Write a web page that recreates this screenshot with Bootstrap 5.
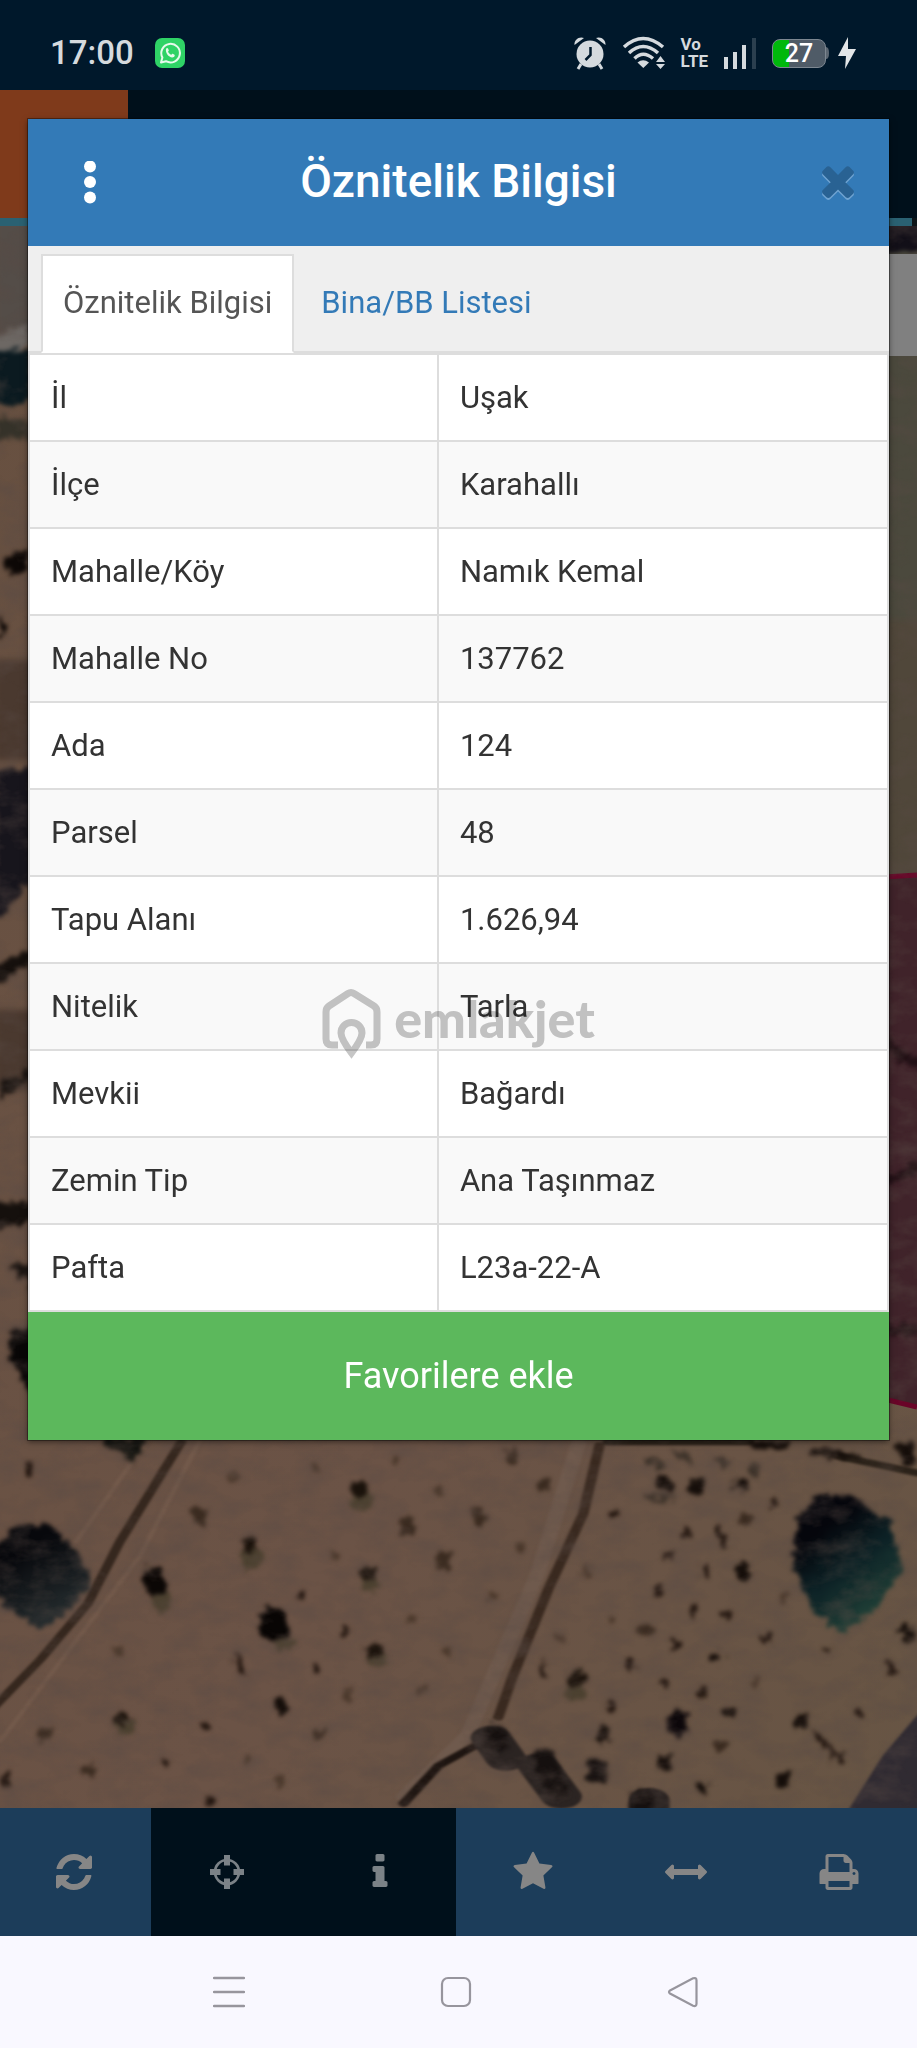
<!DOCTYPE html>
<html lang="tr">
<head>
<meta charset="utf-8">
<meta name="viewport" content="width=device-width, initial-scale=1">
<title>Öznitelik Bilgisi</title>
<link href="https://cdn.jsdelivr.net/npm/bootstrap@5.3.0/dist/css/bootstrap.min.css" rel="stylesheet">
<style>
  body { font-family: Roboto, "Liberation Sans", sans-serif; font-size: 31px; line-height: 44px; color: #333; background: #f9f8ff; }
  .screen, .stage { display: grid; grid-template-columns: minmax(0, 1fr); }
  .screen { min-height: 100vh; }
  .screen > *, .stage > * { grid-area: 1 / 1; min-width: 0; }

  .status-bar { height: 90px; background: #00182b; color: #d5dade; padding: 16px 60px 0 50px; }
  .clock { font-size: 33px; font-weight: 500; }
  .volte { font-size: 17px; line-height: 17px; font-weight: 700; }
  .status-icons { gap: 15px; }
  .battery { width: 54px; height: 29px; border-radius: 8px; color: #fff; font-size: 25px; line-height: 31px; font-weight: 500;
    background: linear-gradient(90deg, #00b80c 16px, #4f5b67 16px); border: 1px solid #7d8791; }

  .app-head { height: 128px; background: #00101b; }
  .app-logo { width: 128px; background: #7f3a1b; }
  .load-line { height: 8px; background: #0d1518; }
  .load-line span { display: block; height: 8px; margin-right: 5px; background: #2a6172; }
  .map { background: #68513f; }
  .map svg { flex: 1 1 0; min-height: 0; width: 100%; }
  .map-tool { top: 28px; right: 0; width: 64px; height: 102px; background: #808080; }
  .tools { background: #1c3d5a; }
  .tools-row { height: 128px; margin-left: -2px; margin-right: 2px; }
  .tool { color: #868686; background: #1c3d5a; }
  .tool.on { color: #7b8287; background: #00101b; }

  .sheet { margin: 29px 28px; background: #efefef; box-shadow: 0 0 0 1px rgba(0,0,0,.35), 0 2px 6px rgba(0,0,0,.5); }
  .sheet-head { display: grid; grid-template-columns: 1fr auto 1fr; height: 127px; background: #337ab7; color: #fff; padding: 0 21px; }
  .sheet-title { font-size: 46px; line-height: 52px; font-weight: 500; }
  .head-btn { width: 60px; height: 60px; }
  .head-menu { width: 82px; }
  .tabs { --bs-nav-tabs-border-width: 2px; --bs-nav-tabs-border-color: #ddd; --bs-nav-tabs-border-radius: 0;
    --bs-nav-tabs-link-active-border-color: #ddd #ddd #fff; --bs-nav-tabs-link-active-color: #555;
    --bs-nav-link-color: #337ab7; --bs-nav-link-padding-x: 20px; --bs-nav-link-padding-y: 25px; padding: 8px 0 0 13px; gap: 5px; }
  .tabs .nav-link { padding-bottom: 26px; }
  .attrs { --bs-table-striped-bg: #fff; --bs-table-bg: #f9f9f9; --bs-table-color: #333; --bs-table-striped-color: #333;
    border-color: #ddd; table-layout: fixed; border-left: 2px solid #ddd; }
  .attrs > tbody > tr > * { border-width: 2px; padding: 21px; line-height: 43px; font-weight: 400; }
  .attrs th { width: 47.6%; }
  .fav { height: 128px; background: #5cb85c; color: #fff; font-size: 36px; }

  .sys-nav { height: 112px; gap: 167px; padding-right: 5px; background: #f9f8ff; }
  .sys-btn { width: 60px; height: 60px; }
  .brand-mark { place-self: center; color: #c6c6c6; mix-blend-mode: multiply; pointer-events: none; gap: 12px; }
  .brand-mark span { font-family: Lato, sans-serif; font-weight: 900; font-size: 52px; line-height: 50px; padding-bottom: 12px; }
  button svg, .status-bar svg, .brand-mark svg { display: block; }
</style>
</head>
<body>
<div class="screen">
  <div class="d-flex flex-column">
    <header class="status-bar d-flex align-items-center justify-content-between">
      <div class="d-flex align-items-center gap-3">
        <span class="clock">17:00</span>
        <svg class="ms-1" width="32" height="32" viewBox="0 0 32 32" fill="none"><rect x="1" y="1" width="30" height="30" rx="7" fill="#2fd366"/><path d="M7 25.500l1.400-5A9.300 9.300 0 1 1 12 24.200z" stroke="#e6faec" stroke-width="2" stroke-linejoin="round"/><path d="M12.200 11.500c.6-.8 1.500-.7 1.800 0l.8 1.800c.1.600-.6 1-.8 1.500.8 1.500 1.700 2.300 3.200 3 .6-.3 1-1.200 1.500-1l1.800 1c.5.300.2 1.600-.6 2.200-3.500 2.300-9.500-4-7.700-8.500z" fill="#e6faec"/></svg>
      </div>
      <div class="status-icons d-flex align-items-center">
        <svg width="34" height="34" viewBox="0 0 34 34" fill="none"><g fill="#d5dade"><circle cx="17" cy="18" r="13.500"/><path d="M1.500 9C1 4 6 0 11 2zM32.500 9C33 4 28 0 23 2z"/></g><path d="M8 28l-3 5M26 28l3 5" stroke="#d5dade" stroke-width="3"/><path d="M17.500 11v8l-5 5" stroke="#00182b" stroke-width="2.500"/></svg>
        <svg width="44" height="34" viewBox="0 0 44 34" fill="none" stroke="#d5dade" stroke-width="3.500"><path d="M2 11Q21-6 41 11M7 17Q21 4 36 17M12.500 22.500Q21 14 31 22.500"/><path d="M15.500 26.500Q21 22 27 26.500L21.300 32z" fill="#d5dade" stroke="none"/><path d="M34 26l4.500-6 4.500 6zM34 28l4.500 5 4.500-5z" fill="#d5dade" stroke="none"/></svg>
        <span class="volte">Vo<br>LTE</span>
        <svg width="34" height="34" viewBox="0 0 34 34"><path d="M1 21h4v12H1zM10 16h4v17h-4zM19 9h4v24h-4z" fill="#d5dade"/><path d="M29 2h4v31h-4z" fill="#2b3f4f"/></svg>
        <div class="d-flex align-items-center">
          <span class="battery d-flex align-items-center justify-content-center">27</span>
          <svg width="31" height="34" viewBox="0 0 31 34"><path d="M0 11q3 0 3 6t-3 6z" fill="#5c6772"/><path d="M22 1L12 20h8l-1 13 11-20h-8z" fill="#e3e6e8"/></svg>
        </div>
      </div>
    </header>

    <div class="stage flex-grow-1">
      <div class="d-flex flex-column">
        <div class="app-head d-flex"><div class="app-logo"></div></div>
        <div class="load-line"><span></span></div>
        <div class="map flex-grow-1 d-flex flex-column position-relative">
          <svg viewBox="0 226 917 1582" preserveAspectRatio="xMidYMax slice" aria-hidden="true">
            <defs>
              <filter id="rough" x="-5%" y="-5%" width="110%" height="110%" color-interpolation-filters="sRGB"><feTurbulence type="fractalNoise" baseFrequency=".12" numOctaves="2" seed="4"/><feDisplacementMap in="SourceGraphic" scale="15" xChannelSelector="R" yChannelSelector="G"/><feGaussianBlur stdDeviation="2"/></filter>
              <filter id="soft" x="-5%" y="-5%" width="110%" height="110%" color-interpolation-filters="sRGB"><feGaussianBlur stdDeviation="3"/></filter>
              <filter id="grain" x="0" y="0" width="100%" height="100%"><feTurbulence type="fractalNoise" baseFrequency=".03 .05" numOctaves="4" seed="9"/><feColorMatrix values="0 0 0 0 .1  0 0 0 0 .07  0 0 0 0 .06  0 1.600 0 0 -.65"/></filter>
              <linearGradient id="soil" x1="0" y1="0" x2="1" y2="1"><stop offset="0" stop-color="#675040"/><stop offset=".6" stop-color="#6b5346"/><stop offset="1" stop-color="#675544"/></linearGradient>
              <linearGradient id="crown" x1="0" y1="0" x2=".6" y2="1"><stop offset=".3" stop-color="#05060c"/><stop offset=".6" stop-color="#0d2226"/><stop offset="1" stop-color="#23453a"/></linearGradient>
              <linearGradient id="crown2" x1="0" y1="0" x2=".5" y2="1"><stop offset=".3" stop-color="#07080c"/><stop offset="1" stop-color="#262e30"/></linearGradient>
            </defs>
            <rect y="226" width="917" height="1582" fill="url(#soil)"/>
            <g filter="url(#soft)"><path d="M-5 220h45v115L-5 350z" fill="#544d48"/><path d="M880 220h45v400h-45z" fill="#4b493d"/><path d="M880 620h45v260h-45z" fill="#50473a"/><path d="M-5 660h45v100H-5zM-5 1010h45v80H-5z" fill="#4a392f"/></g>
            <g filter="url(#rough)">
              <path d="M-5 335l35-12v20L-5 362z" fill="#6d6864"/><path d="M-5 350h37v50L-5 405z" fill="#0b1a20"/>
              <path d="M-5 415l37 10v14L-5 440z" fill="#353229"/><path d="M2 558l26-8v20l-18 6zM0 615l9 12-9 12z" fill="#0d0806"/>
              <path d="M-5 772l39-6v110L-5 925z" fill="#17151c"/><path d="M-5 965l35-15v14L-5 985zM0 1085l30-16v8L0 1100zM-5 1205l37-4v20L-5 1230zM10 1265h24v24z" fill="#15100d"/>
              <path d="M10 1330h26v66L8 1360z" fill="#080606"/>
              <path d="M884 220h40v32h-40z" fill="#120f18"/>
            </g>
            <path d="M884 877l33-2v532l-33-7z" fill="#40232a"/><path d="M884 877l33-2M884 1399l33 8" stroke="#6a0428" stroke-width="5"/>
            <g transform="translate(0 1280) scale(.5848 .3444)">
              <g filter="url(#soft)" fill="none" stroke-linecap="round">
                <path d="M250 470L130 760M340 470L240 800 0 1340" stroke="#735a4b" stroke-width="8"/>
                <path d="M310 470L205 760 150 940 70 1100-10 1240" stroke="#35271e" stroke-width="17"/>
                <path d="M990 470L920 850 800 1320 690 1500" stroke="#6f5a4d" stroke-width="26"/>
                <path d="M1025 480l-28 200-60 220-60 250-25 120" stroke="#39291f" stroke-width="18"/>
                <path d="M815 1350L750 1410 690 1520" stroke="#1e1511" stroke-width="18"/>
                <path d="M1040 470h240M1430 510l138 50" stroke="#2c231a" stroke-width="20"/>
                <path d="M1590 1220l-80 160-60 160h140z" fill="#302b32"/>
                <path d="M840 1330l25 60M920 1410l40 90M1110 1510v30" stroke="#2b2422" stroke-width="70"/>
              </g>
            </g>
            <g filter="url(#rough)" fill="none" stroke-linecap="round">
              <path d="M886 1040l14 16 20 8M890 1180l30-14M890 1330h26" stroke="#211015" stroke-width="10"/>
              <g transform="translate(0 1280) scale(.5848 .3444)">
                <path d="M1365 690l35-70 60 10 60 70 25 140-45 110-60 75-45-60-40-140z" fill="url(#crown)"/>
                <path d="M-10 780l40-70 55 0 45 75 25 100-40 80-45 50-60-60L-10 900z" fill="url(#crown2)"/>
                <path d="M175 460h75l-25 75z" fill="#12130f"/>
                <g stroke="#4c4130" stroke-width="34"><path d="M620 625v25M430 790v30M278 920v30M635 870v15M646 1090v15M214 1290v10M985 1190v15M480 1040l10 15"/></g>
                <g stroke="#1a120b" stroke-width="28"><path d="M615 600v15M425 760v15M630 845v10M640 1070v10M210 1265v10M985 1150v15"/></g>
                <path d="M262 850l6 50" stroke="#0b0705" stroke-width="36"/>
                <path d="M465 975l6 50" stroke="#080504" stroke-width="46"/>
                <path d="M845 1310l5 40M930 1380l25 110M1100 1500v60M1020 1410v30" stroke="#15100f" stroke-width="36"/>
                <path d="M1160 1265v40" stroke="#0c070a" stroke-width="36"/>
                <path d="M1400 500l60 10M1290 480h50M1545 480l10 50M1190 590v30M1130 580l10 20M1265 590v10M1270 830l5 30M1550 1010l5 30M1370 1270v20M1250 1250v10M1225 1090v10M1135 1395v15M1030 1310v25M478 1225l5 25M1200 1465v10M1340 1440v20" stroke="#150e0a" stroke-width="22"/>
                <path d="M1110 520l20 20M1160 500l20 30M1230 520l10 20M1110 630h40M1290 540v20" stroke="#3c3229" stroke-width="16"/>
                <path d="M338 670l5 30M695 695v35M815 670l5 30M760 795v35M875 500v20M930 590v15M75 1310v20M150 1420v10M545 1315v10M1275 690v10M1230 1345v10M1105 1010v15" stroke="#3a2b20" stroke-width="22"/>
                <path d="M50 540v15M1050 670v10M1325 640v10M1175 725v15M1225 720l15 50M1145 795v10M1205 830v30M1185 950v20M1245 970v10M1125 895v20M1155 1050v20M1075 1105l5 20M930 1115v30M1520 1105l8 40M1415 1070v15M1135 1165v10M1200 1180v30M1045 1230v10M1470 1250v10M1395 1320l40 70M540 1120v15M405 1090l12 50M515 915v5M590 1015v10M350 1285v10M285 1400v10M360 1505v10M1310 1035v10M10 1430v40" stroke="#21150f" stroke-width="13"/>
                <path d="M540 540v10M678 520v5M750 605v10M570 795v10M705 980v10M840 910v10M765 1070v20M595 1200v20M720 1190v10M1005 835v20M1045 985v5M960 1035v5M1290 1165v5M1340 915v15M200 1075v10M480 1445v20M425 1390v5M400 570v10M890 770v10" stroke="#4a382b" stroke-width="14"/>
              </g>
            </g>
            <rect y="226" width="917" height="1582" filter="url(#grain)" opacity=".6"/>
          </svg>
          <div class="map-tool position-absolute"></div>
        </div>
        <div class="tools">
          <div class="tools-row d-flex">
            <button class="tool btn rounded-0 border-0 flex-fill w-100 d-flex align-items-center justify-content-center" type="button" aria-label="Yenile"><svg width="42" height="42" viewBox="0 0 1536 1792" fill="currentColor"><path d="M1511 1056q0 5-1 7-64 268-268 434.500t-478 166.500q-146 0-282.500-55t-243.500-157l-129 129q-19 19-45 19t-45-19-19-45v-448q0-26 19-45t45-19h448q26 0 45 19t19 45-19 45l-137 137q71 66 161 102t187 36q134 0 250-65t186-179q11-17 53-117 8-23 30-23h192q13 0 22.500 9.500t9.500 22.500zm25-800v448q0 26-19 45t-45 19h-448q-26 0-45-19t-19-45 19-45l138-138q-148-137-349-137-134 0-250 65t-186 179q-11 17-53 117-8 23-30 23h-199q-13 0-22.500-9.500t-9.500-22.500v-7q65-268 270-434.500t480-166.500q146 0 284 55.500t245 156.500l130-129q19-19 45-19t45 19 19 45z"/></svg></button>
            <button class="tool on btn rounded-0 border-0 flex-fill w-100 d-flex align-items-center justify-content-center" type="button" aria-label="Konum"><svg width="36" height="36" viewBox="0 0 36 36" fill="none" stroke="currentColor"><circle cx="18" cy="18" r="12" stroke-width="2.600"/><path d="M18 1v10.500M18 24.500V35M1 18h10.500M24.500 18H35" stroke-width="6"/></svg></button>
            <button class="tool on btn rounded-0 border-0 flex-fill w-100 d-flex align-items-center justify-content-center" type="button" aria-label="Bilgi"><svg width="42" height="42" viewBox="0 0 1792 1792" fill="currentColor"><path d="M1216 1344v128q0 26-19 45t-45 19h-512q-26 0-45-19t-19-45v-128q0-26 19-45t45-19h64v-384h-64q-26 0-45-19t-19-45v-128q0-26 19-45t45-19h384q26 0 45 19t19 45v576h64q26 0 45 19t19 45zm-128-1152v192q0 26-19 45t-45 19h-256q-26 0-45-19t-19-45v-192q0-26 19-45t45-19h256q26 0 45 19t19 45z"/></svg></button>
            <button class="tool btn rounded-0 border-0 flex-fill w-100 d-flex align-items-center justify-content-center" type="button" aria-label="Favoriler"><svg width="42" height="42" viewBox="0 0 1792 1792" fill="currentColor"><path d="M1728 647q0 22-26 48l-363 354 86 500q1 7 1 20 0 21-10.500 35.500t-30.500 14.500q-19 0-40-12l-449-236-449 236q-22 12-40 12-21 0-31.500-14.500t-10.500-35.500q0-6 2-20l86-500-364-354q-25-27-25-48 0-37 56-46l502-73 225-455q19-41 49-41t49 41l225 455 502 73q56 9 56 46z"/></svg></button>
            <button class="tool btn rounded-0 border-0 flex-fill w-100 d-flex align-items-center justify-content-center" type="button" aria-label="Ölçüm"><svg width="42" height="42" viewBox="0 0 1792 1792" fill="currentColor"><path d="M1792 896q0 26-19 45l-256 256q-19 19-45 19t-45-19-19-45v-128h-1024v128q0 26-19 45t-45 19-45-19l-256-256q-19-19-19-45t19-45l256-256q19-19 45-19t45 19 19 45v128h1024v-128q0-26 19-45t45-19 45 19l256 256q19 19 19 45z"/></svg></button>
            <button class="tool btn rounded-0 border-0 flex-fill w-100 d-flex align-items-center justify-content-center" type="button" aria-label="Yazdır"><svg width="42" height="42" viewBox="0 0 1792 1792" fill="currentColor"><path fill-rule="evenodd" d="M448 1536h896v-256h-896v256zm0-640h896v-384h-160q-40 0-68-28t-28-68v-160h-640v640zm1152 64q0-26-19-45t-45-19-45 19-19 45 19 45 45 19 45-19 19-45zm128 0v416q0 13-9.500 22.500t-22.500 9.500h-224v160q0 40-28 68t-68 28h-960q-40 0-68-28t-28-68v-160h-224q-13 0-22.500-9.500t-9.500-22.500v-416q0-79 56.500-135.500t135.500-56.500h64v-544q0-40 28-68t68-28h672q40 0 88 20t76 48l152 152q28 28 48 76t20 88v256h64q79 0 135.500 56.500t56.500 135.500z"/></svg></button>
          </div>
        </div>
      </div>

      <section class="sheet align-self-start position-relative" role="dialog" aria-labelledby="sheetTitle">
        <div class="sheet-head align-items-center">
          <button class="head-btn head-menu btn border-0 p-0 d-flex align-items-center justify-content-center" type="button" aria-label="Menü"><svg width="12" height="44" viewBox="0 0 12 44" fill="#fff"><circle cx="6" cy="5.500" r="6"/><circle cx="6" cy="21" r="6"/><circle cx="6" cy="36.500" r="6"/></svg></button>
          <h1 class="sheet-title m-0 pb-1" id="sheetTitle">Öznitelik Bilgisi</h1>
          <button class="head-btn btn border-0 p-0 ms-auto d-flex align-items-center justify-content-center" type="button" aria-label="Kapat"><svg width="48" height="48" viewBox="0 0 1792 1792"><defs><path id="cross" d="M1490 1322q0 40-28 68l-136 136q-28 28-68 28t-68-28l-294-294-294 294q-28 28-68 28t-68-28l-136-136q-28-28-28-68t28-68l294-294-294-294q-28-28-28-68t28-68l136-136q28-28 68-28t68 28l294 294 294-294q28-28 68-28t68 28l136 136q28 28 28 68t-28 68l-294 294 294 294q28 28 28 68z"/></defs><use href="#cross" y="-20" fill="#6fa3d1"/><use href="#cross" y="-95" fill="#296293"/></svg></button>
        </div>
        <ul class="tabs nav nav-tabs">
          <li class="nav-item"><a class="nav-link active" aria-current="page" href="#attrs">Öznitelik Bilgisi</a></li>
          <li class="nav-item"><a class="nav-link" href="#units">Bina/BB Listesi</a></li>
        </ul>
        <table class="attrs table table-bordered table-striped mb-0" id="attrs">
          <tbody>
            <tr><th scope="row">İl</th><td>Uşak</td></tr>
            <tr><th scope="row">İlçe</th><td>Karahallı</td></tr>
            <tr><th scope="row">Mahalle/Köy</th><td>Namık Kemal</td></tr>
            <tr><th scope="row">Mahalle No</th><td>137762</td></tr>
            <tr><th scope="row">Ada</th><td>124</td></tr>
            <tr><th scope="row">Parsel</th><td>48</td></tr>
            <tr><th scope="row">Tapu Alanı</th><td>1.626,94</td></tr>
            <tr><th scope="row">Nitelik</th><td>Tarla</td></tr>
            <tr><th scope="row">Mevkii</th><td>Bağardı</td></tr>
            <tr><th scope="row">Zemin Tip</th><td>Ana Taşınmaz</td></tr>
            <tr><th scope="row">Pafta</th><td>L23a-22-A</td></tr>
          </tbody>
        </table>
        <button class="fav btn w-100 rounded-0 border-0" type="button">Favorilere ekle</button>
      </section>
    </div>

    <nav class="sys-nav d-flex align-items-center justify-content-center" aria-label="Sistem">
      <button class="sys-btn btn border-0 p-0 d-flex align-items-center justify-content-center" type="button" aria-label="Son uygulamalar"><svg width="32" height="32" viewBox="0 0 32 32"><path d="M1 2h30M1 16h30M1 30h30" stroke="#97959d" stroke-width="2.400" stroke-linecap="round"/></svg></button>
      <button class="sys-btn btn border-0 p-0 d-flex align-items-center justify-content-center" type="button" aria-label="Ana ekran"><svg width="32" height="32" viewBox="0 0 32 32"><rect x="2" y="2" width="28" height="28" rx="6" fill="none" stroke="#97959d" stroke-width="2.200"/></svg></button>
      <button class="sys-btn btn border-0 p-0 d-flex align-items-center justify-content-center" type="button" aria-label="Geri"><svg width="32" height="32" viewBox="0 0 32 32"><path d="M3 14.500L26 2.300q3.500-1 3.500 2v23.500q0 3-3.500 2L3 17.500q-2-1.500 0-3z" fill="none" stroke="#97959d" stroke-width="2.200"/></svg></button>
    </nav>
  </div>

  <div class="brand-mark d-flex align-items-center">
    <svg width="60" height="74" viewBox="0 0 60 74" fill="none" stroke="currentColor" stroke-width="7"><path d="M16 58H10q-6 0-6-6V25q0-4 3-6L26 6.500q3-2 6 0L52 19q3 2 3 6v27q0 6-6 6h-5"/><path d="M29.500 66Q19 52 19 46a10.500 10.500 0 0 1 21 0q0 6-10.500 20z"/></svg>
    <span>emlakjet</span>
  </div>
</div>
<script src="https://cdn.jsdelivr.net/npm/bootstrap@5.3.0/dist/js/bootstrap.bundle.min.js"></script>
</body>
</html>
